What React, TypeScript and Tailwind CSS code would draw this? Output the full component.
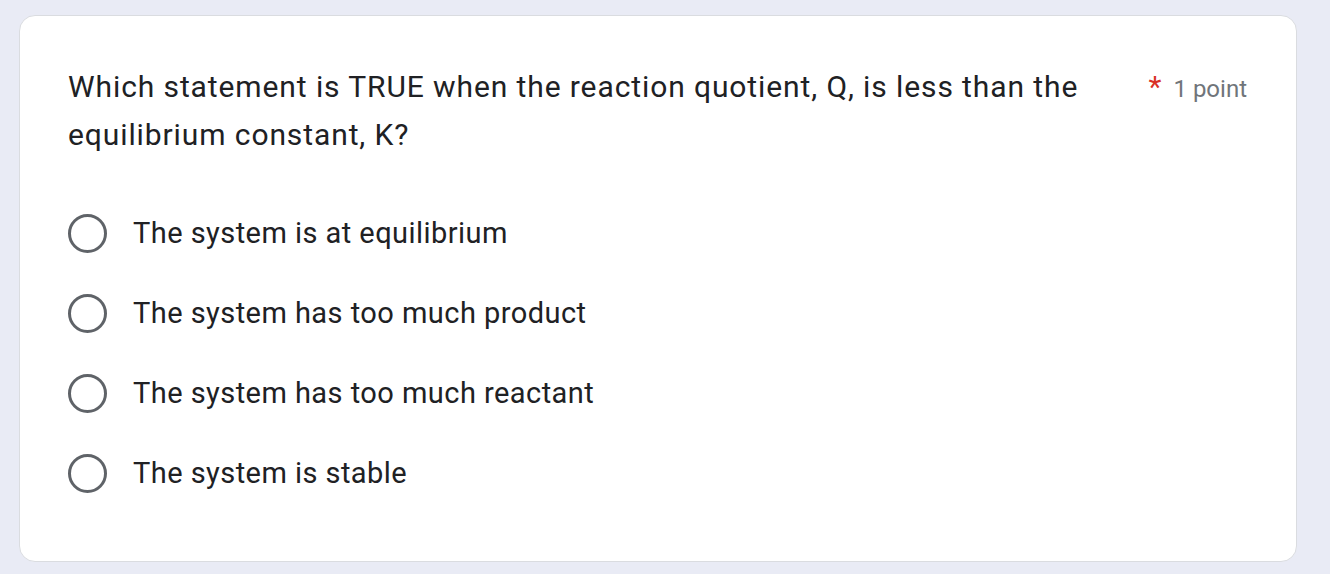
import React from 'react';

const options = [
  'The system is at equilibrium',
  'The system has too much product',
  'The system has too much reactant',
  'The system is stable',
];

// Single radio row: ring + label
const RadioOption = ({ label }: { label: string }) => (
  <label className="flex h-20 items-center cursor-pointer">
    <span className="box-border h-[39px] w-[39px] shrink-0 rounded-full border-[3.5px] border-[#5f6368]" />
    <span className="ml-[26px] text-[29px] leading-[40px] tracking-[0.45px] text-[#202124]">{label}</span>
  </label>
);

export default function App() {
  return (
    <div
      className="min-h-[574px] w-full bg-[#e9ebf5] px-[19px] pt-[15px]"
      style={{ fontFamily: 'Roboto, "Liberation Sans", Arial, sans-serif' }}
    >
      <div className="w-[1278px] rounded-[16px] border border-[#dadce0] bg-white pl-12 pr-[49px] pt-[47px] pb-12">
        <div className="flex items-start">
          <h2 className="flex-1 pr-10 text-[30px] font-normal leading-[48px] tracking-[0.9px] text-[#202124]">
            Which statement is TRUE when the reaction quotient, Q, is less than the equilibrium constant, K?
          </h2>
          <div className="mt-[10px] flex items-baseline whitespace-nowrap">
            <span className="text-[30px] leading-[28px] text-[#d93025]">*</span>
            <span className="ml-[12px] text-[24px] leading-[28px] text-[#70757a]">1 point</span>
          </div>
        </div>
        <div className="mt-[34px] flex flex-col">
          {options.map((o) => (
            <RadioOption key={o} label={o} />
          ))}
        </div>
      </div>
    </div>
  );
}
